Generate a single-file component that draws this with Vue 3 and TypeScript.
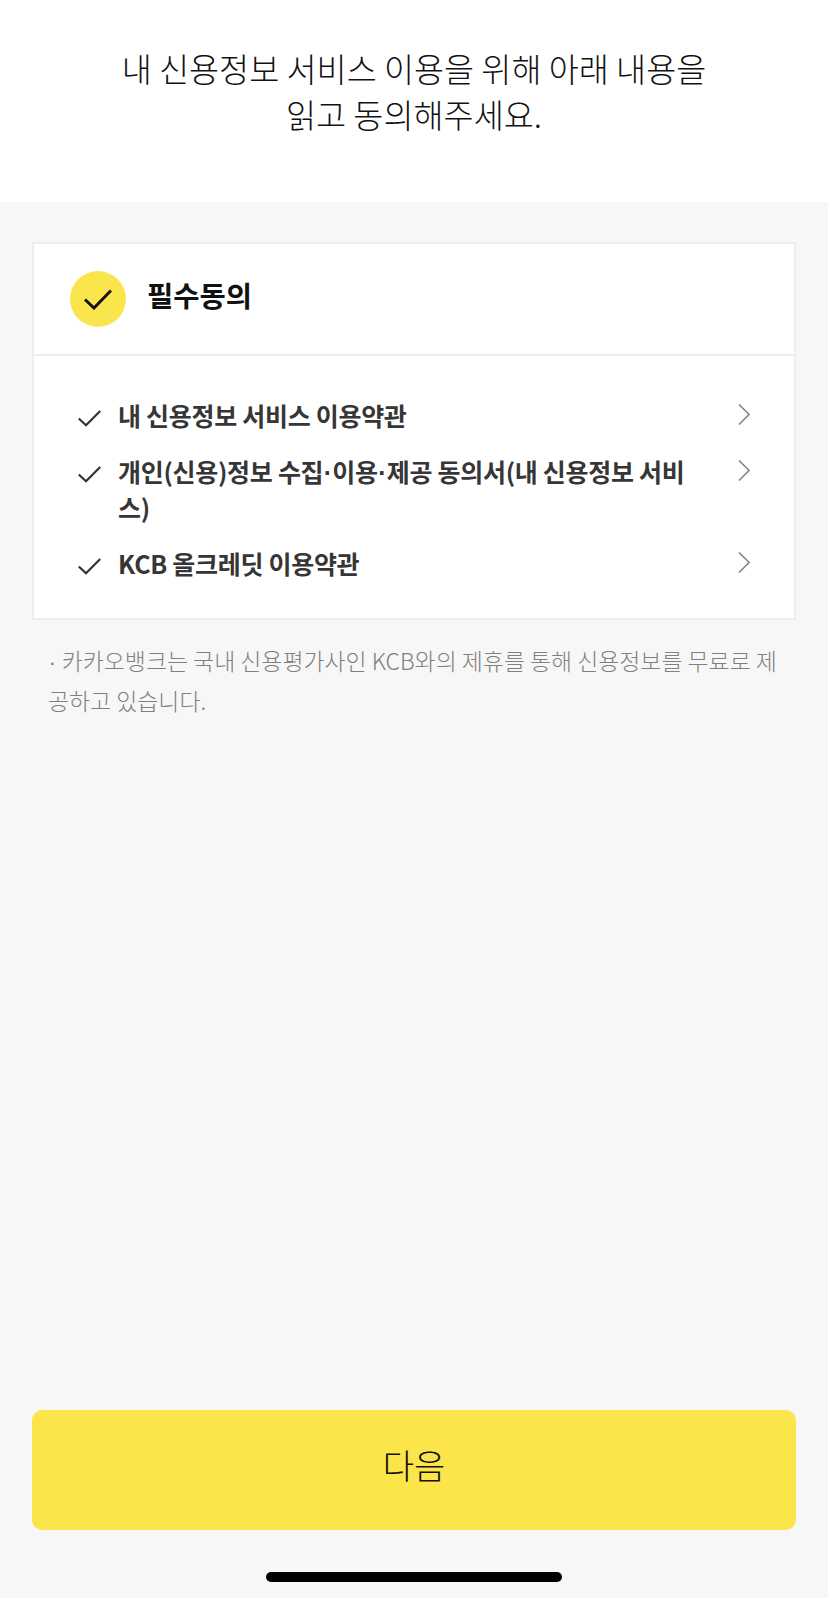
<script setup lang="ts">
const items = [
  { label: ['내 신용정보 서비스 이용약관'] },
  { label: ['개인(신용)정보 수집', '이용', '제공 동의서(내 신용정보 서비스)'] },
  { label: ['KCB 올크레딧 이용약관'] },
]
</script>

<template>
  <div class="page">
    <header class="head">
      <h1 class="title">내 신용정보 서비스 이용을 위해 아래 내용을<br />읽고 동의해주세요.</h1>
    </header>
    <main class="body">
      <section class="card">
        <div class="card-head">
          <span class="circle">
            <svg width="28" height="21" viewBox="0 0 28 21" fill="none">
              <path d="M1 10.5L10 19L27 1.5" stroke="#111" stroke-width="3" />
            </svg>
          </span>
          <span class="card-title">필수동의</span>
        </div>
        <ul class="list">
          <li v-for="item in items" :key="item.label[0]" class="row">
            <svg class="check" width="23" height="17" viewBox="0 0 23 17" fill="none">
              <path d="M0.8 8.5L8 15.2L22.2 1" stroke="#333" stroke-width="2.2" />
            </svg>
            <span class="label"><template v-for="(part, i) in item.label" :key="i"><span v-if="i > 0" class="dot">·</span>{{ part }}</template></span>
            <svg class="chev" width="12" height="21" viewBox="0 0 12 21" fill="none">
              <path d="M1 0.5L11 10.5L1 20.5" stroke="#888" stroke-width="1.6" />
            </svg>
          </li>
        </ul>
      </section>
      <p class="note"><span class="dot">·</span> 카카오뱅크는 국내 신용평가사인 KCB와의 제휴를 통해 신용정보를 무료로 제공하고 있습니다.</p>
      <div class="footer">
        <button class="next" type="button">다음</button>
        <div class="home"></div>
      </div>
    </main>
  </div>
</template>

<style>
html, body { margin: 0; padding: 0; }
</style>

<style scoped>
.page {
  width: 828px;
  height: 1598px;
  display: flex;
  flex-direction: column;
  font-family: "Noto Sans CJK KR", "Noto Sans", sans-serif;
  background: #f7f7f7;
}
.head {
  height: 202px;
  box-sizing: border-box;
  background: #fff;
  padding-top: 45px;
}
.title {
  margin: 0;
  font-size: 32.7px;
  font-weight: 300;
  line-height: 46px;
  text-align: center;
  color: #111;
}
.body {
  flex: 1;
  display: flex;
  flex-direction: column;
  padding: 40px 32px 0;
}
.card {
  background: #fff;
  border: 2px solid #eeeeee;
}
.card-head {
  height: 110px;
  display: flex;
  align-items: center;
  padding-left: 36px;
  border-bottom: 2px solid #eeeeee;
}
.circle {
  width: 56px;
  height: 56px;
  border-radius: 50%;
  background: #fbe54d;
  display: flex;
  align-items: center;
  justify-content: center;
}
.card-title {
  margin-left: 21px;
  margin-bottom: 8px;
  font-size: 28.5px;
  font-weight: 700;
  color: #111;
  line-height: 40px;
}
.list {
  list-style: none;
  margin: 0;
  padding: 41px 0 37px;
  display: flex;
  flex-direction: column;
  gap: 20px;
}
.row {
  position: relative;
  display: flex;
  align-items: flex-start;
  padding-left: 84px;
}
.check {
  position: absolute;
  left: 44px;
  top: 13px;
}
.chev {
  position: absolute;
  right: 44px;
  top: 7px;
}
.label {
  width: 576px;
  font-size: 25px;
  font-weight: 700;
  line-height: 36px;
  letter-spacing: -0.3px;
  color: #363636;
  word-break: break-all;
}
.dot {
  font-family: "Liberation Sans", sans-serif;
  line-height: 0;
  margin: 0 0.5px;
}
.note {
  margin: 20px 16px 0;
  font-size: 22.9px;
  font-weight: 300;
  line-height: 40px;
  color: #808080;
  word-break: break-all;
}
.footer {
  margin-top: auto;
  display: flex;
  flex-direction: column;
  align-items: center;
}
.next {
  width: 100%;
  height: 120px;
  border: 0;
  border-radius: 10px;
  background: #fce54a;
  padding: 0 0 12px;
  font-family: inherit;
  font-size: 34px;
  font-weight: 300;
  color: #111;
}
.home {
  width: 296px;
  height: 10px;
  margin: 42px 0 16px;
  border-radius: 5px;
  background: #000;
}
</style>
